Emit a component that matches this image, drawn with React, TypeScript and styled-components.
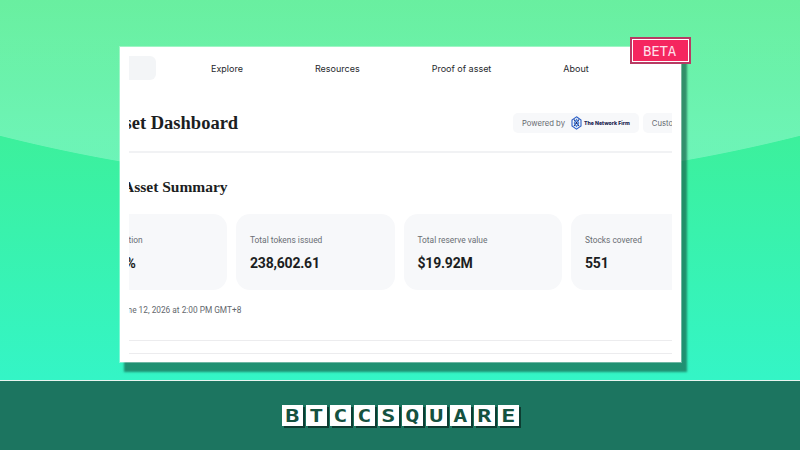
import React from "react";
import styled, { createGlobalStyle } from "styled-components";

const GlobalStyle = createGlobalStyle`
  html, body {
    margin: 0;
    padding: 0;
    width: 800px;
    height: 450px;
    overflow: hidden;
    font-family: "Roboto", "Liberation Sans", sans-serif;
  }
`;

const Stage = styled.div`
  width: 800px;
  height: 450px;
  display: flex;
  flex-direction: column;
`;

const Hero = styled.section`
  height: 380px;
  box-sizing: border-box;
  padding: 47px 119px 0 120px;
  background:
    radial-gradient(circle 1632px at 400px -1446px, rgba(255, 255, 255, 0.25) 99.95%, transparent 100%),
    linear-gradient(180deg, #37ea80 0%, #3cf09c 36%, #34f5c6 100%);
`;

const Window = styled.div`
  position: relative;
  width: 561px;
  height: 315px;
  box-sizing: border-box;
  background: #fff;
  padding: 0 9px;
  box-shadow: 0 0 0 1px rgba(255, 255, 255, 0.35), 5px 9px 2px 1px rgba(22, 92, 72, 0.66);
`;

const BetaBadge = styled.div`
  position: absolute;
  top: -10px;
  right: -10px;
  width: 61px;
  height: 27px;
  box-sizing: border-box;
  border: 2px solid #b83a63;
  background: #f5265f;
  outline: 1px solid #ffffff;
  outline-offset: -3px;
  display: flex;
  align-items: center;
  justify-content: center;
  color: #ffdfe8;
  font-family: "DejaVu Sans Mono", monospace;
  font-size: 14px;
  letter-spacing: -0.2px;
  padding-right: 2px;
`;

const Viewport = styled.div`
  height: 100%;
  overflow: hidden;
  display: flex;
  flex-direction: column;
`;

const Nav = styled.nav`
  height: 24px;
  margin-top: 9px;
  flex: none;
  display: flex;
  align-items: center;
`;

const LogoSlot = styled.div`
  width: 27px;
  height: 24px;
  background: #f3f5f7;
  border-radius: 0 6px 6px 0;
`;

const NavLinks = styled.div`
  margin-left: 55px;
  display: flex;
  gap: 72px;
`;

const NavLink = styled.a`
  font-family: "Inter", sans-serif;
  font-size: 9px;
  color: #26282c;
  white-space: nowrap;
`;

const TitleRow = styled.header`
  margin-top: 33px;
  height: 40px;
  flex: none;
  box-sizing: border-box;
  border-bottom: 2px solid #f1f2f4;
  display: flex;
  align-items: flex-start;
  justify-content: space-between;
`;

const PageTitle = styled.h1`
  margin: 0 0 0 -25px;
  font-family: "Liberation Serif", serif;
  font-size: 18.5px;
  line-height: 20px;
  font-weight: 700;
  color: #1c1e22;
  white-space: nowrap;
`;

const Pills = styled.div`
  display: flex;
  gap: 4px;
  width: 159px;
  flex: none;
`;

const Pill = styled.div`
  height: 20px;
  flex: none;
  box-sizing: border-box;
  padding: 0 9px;
  background: #f7f8fa;
  border-radius: 5px;
  display: flex;
  align-items: center;
  gap: 6px;
  font-family: "Inter", sans-serif;
  font-size: 7.7px;
  color: #666a70;
  white-space: nowrap;
`;

const FirmName = styled.span`
  margin-left: -4px;
  font-family: "Inter", sans-serif;
  font-size: 5.2px;
  font-weight: 800;
  color: #1b2350;
`;

const SectionTitle = styled.h2`
  margin: 24px 0 0 -6px;
  font-family: "Liberation Serif", serif;
  font-size: 15.5px;
  line-height: 20px;
  font-weight: 700;
  color: #1c1e22;
  white-space: nowrap;
`;

const Stats = styled.div`
  margin: 17px 0 0 -60.5px;
  display: flex;
  gap: 9px;
  flex: none;
`;

const StatCard = styled.div`
  width: 158.5px;
  height: 76px;
  flex: none;
  box-sizing: border-box;
  padding: 20px 14px 0;
  background: #f7f8fa;
  border-radius: 14px;
`;

const StatLabel = styled.div`
  font-size: 8.4px;
  line-height: 12px;
  color: #6a6e74;
  white-space: nowrap;
`;

const StatValue = styled.div`
  margin-top: 7px;
  font-size: 14px;
  line-height: 20px;
  font-weight: 700;
  color: #1c1e22;
  letter-spacing: -0.2px;
  white-space: nowrap;
`;

const UpdatedAt = styled.p`
  margin: 14px 0 0 -32px;
  font-size: 8.3px;
  line-height: 12px;
  color: #63676d;
  white-space: nowrap;
`;

const Rule = styled.hr<{ $gap: number }>`
  margin: ${(p) => p.$gap}px 0 0;
  border: 0;
  border-top: 1px solid #ececee;
  flex: none;
`;

const Footer = styled.footer`
  height: 70px;
  box-sizing: border-box;
  border-top: 1px solid #e8f5f0;
  background: #1c7560;
  display: flex;
  align-items: center;
  justify-content: center;
  gap: 3px;
  padding-bottom: 1px;
`;

const Tile = styled.span`
  width: 21px;
  height: 21px;
  background: #fff;
  box-shadow: 2px 2px 0 #0d3d32;
  display: flex;
  align-items: center;
  justify-content: center;
`;

const TileGlyph = styled.span`
  font-family: "DejaVu Sans Mono", monospace;
  font-size: 18px;
  line-height: 21px;
  font-weight: 700;
  color: #14513f;
  transform: scaleX(1.3);
`;

const NetworkMark = () => (
  <svg width="11" height="14" viewBox="0 0 11 14" fill="none" strokeWidth="1.1">
    <path d="M5.5 .8 10 4v6l-4.5 3.2L1 10V4z" stroke="#2b5fc7" />
    <path d="M3 3.5 8 10M8 3.5 3 10" stroke="#1b2a70" />
    <path d="M5.5 3.4 7.8 7 5.5 10.6 3.2 7z" stroke="#3f7fe0" />
  </svg>
);

const stats = [
  { label: "Collateralization", value: "100.02%" },
  { label: "Total tokens issued", value: "238,602.61" },
  { label: "Total reserve value", value: "$19.92M" },
  { label: "Stocks covered", value: "551" },
];

export default function App() {
  return (
    <>
      <GlobalStyle />
      <Stage>
        <Hero>
          <Window>
            <BetaBadge>BETA</BetaBadge>
            <Viewport>
              <Nav>
                <LogoSlot />
                <NavLinks>
                  <NavLink>Explore</NavLink>
                  <NavLink>Resources</NavLink>
                  <NavLink>Proof of asset</NavLink>
                  <NavLink>About</NavLink>
                </NavLinks>
              </Nav>
              <TitleRow>
                <PageTitle>Asset Dashboard</PageTitle>
                <Pills>
                  <Pill>
                    Powered by
                    <NetworkMark />
                    <FirmName>The Network Firm</FirmName>
                  </Pill>
                  <Pill>Custodians</Pill>
                </Pills>
              </TitleRow>
              <SectionTitle>Asset Summary</SectionTitle>
              <Stats>
                {stats.map((s) => (
                  <StatCard key={s.label}>
                    <StatLabel>{s.label}</StatLabel>
                    <StatValue>{s.value}</StatValue>
                  </StatCard>
                ))}
              </Stats>
              <UpdatedAt>As of June 12, 2026 at 2:00 PM GMT+8</UpdatedAt>
              <Rule $gap={24} />
              <Rule $gap={12} />
            </Viewport>
          </Window>
        </Hero>
        <Footer>
          {"BTCCSQUARE".split("").map((ch, i) => (
            <Tile key={i}>
              <TileGlyph>{ch}</TileGlyph>
            </Tile>
          ))}
        </Footer>
      </Stage>
    </>
  );
}
